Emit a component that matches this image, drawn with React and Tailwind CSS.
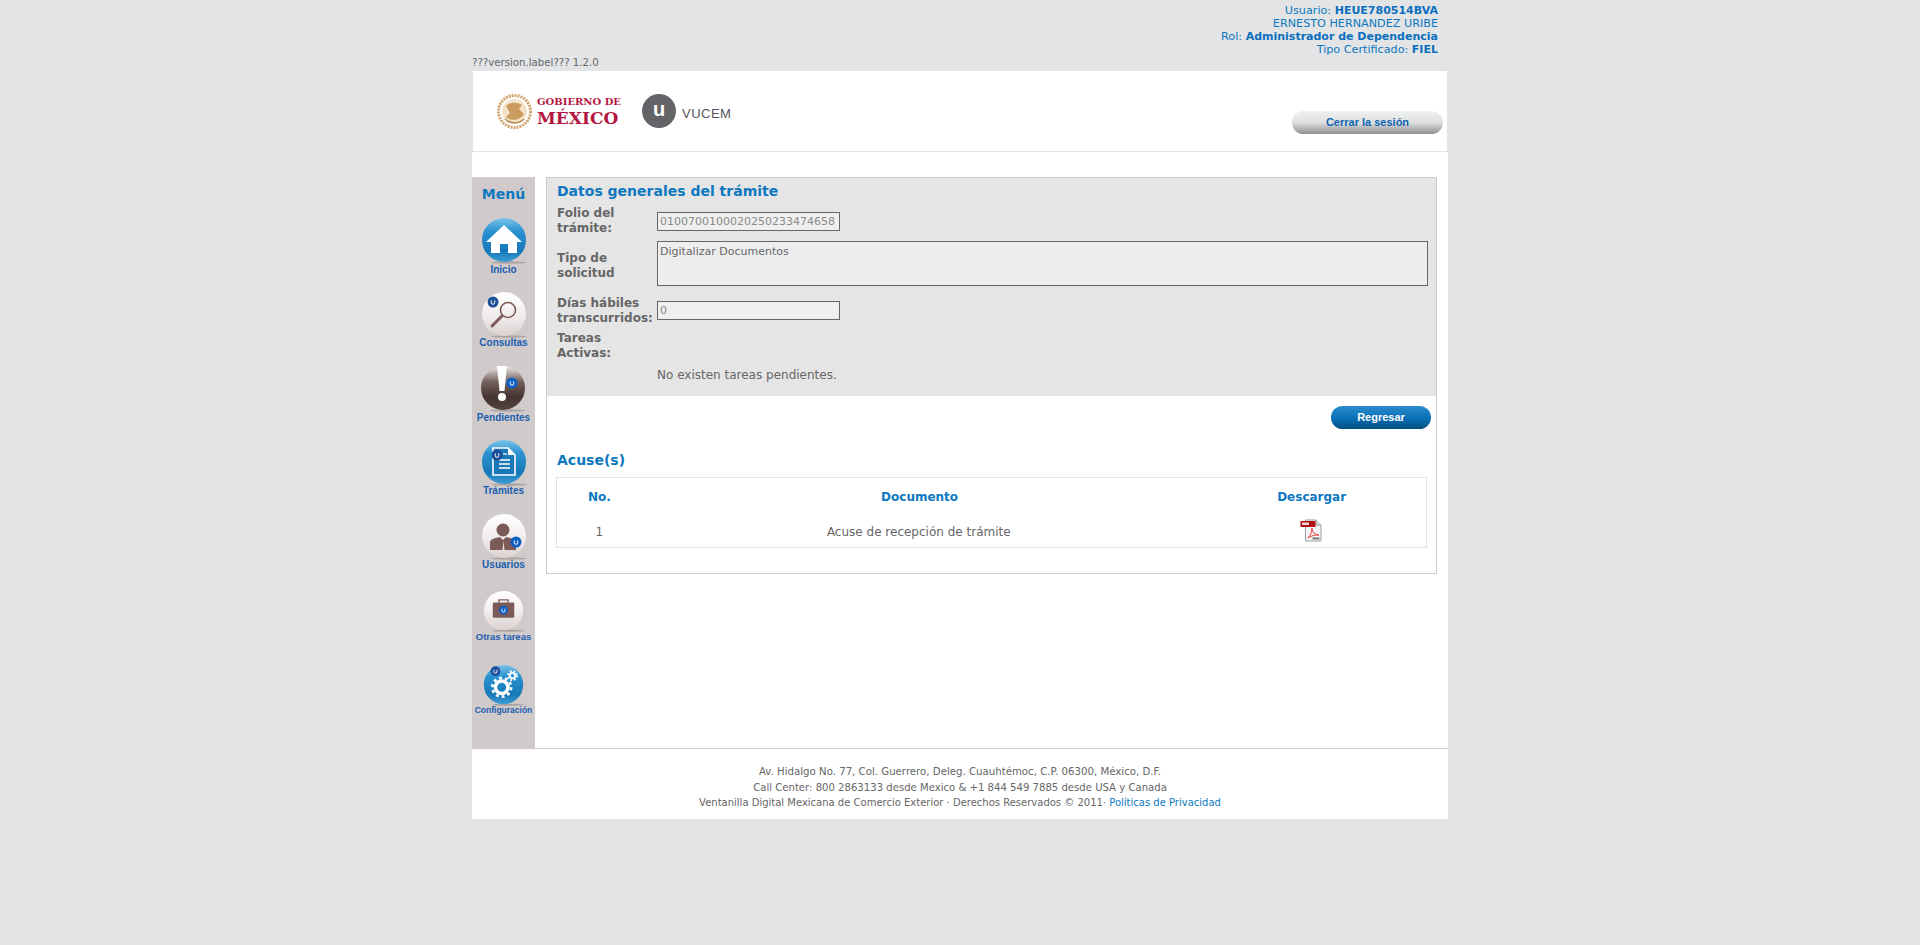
import React from "react";

const Ball = ({ dark, blue, w = 48, h = 50, children }) => (
  <svg width={w} height={h} viewBox="0 0 48 50" className="block">
    <defs>
      <linearGradient id="ballBlue" x1="0" y1="0" x2="0" y2="1">
        <stop offset="0" stopColor="#7cc4ea" />
        <stop offset="0.3" stopColor="#2a92d0" />
        <stop offset="0.75" stopColor="#1678b8" />
        <stop offset="1" stopColor="#3f9ed6" />
      </linearGradient>
      <linearGradient id="ballLight" x1="0" y1="0" x2="0" y2="1">
        <stop offset="0" stopColor="#ffffff" />
        <stop offset="0.5" stopColor="#f3eeee" />
        <stop offset="1" stopColor="#dcd2d2" />
      </linearGradient>
      <linearGradient id="ballDark" x1="0" y1="0" x2="0" y2="1">
        <stop offset="0" stopColor="#efeaea" />
        <stop offset="0.35" stopColor="#75625f" />
        <stop offset="0.7" stopColor="#453431" />
        <stop offset="1" stopColor="#55423f" />
      </linearGradient>
    </defs>
    <ellipse cx="29" cy="46.5" rx="18" ry="1.2" fill="#9a9392" opacity="0.7" />
    <circle cx="24" cy="24" r="22" fill={blue ? "url(#ballBlue)" : dark ? "url(#ballDark)" : "url(#ballLight)"} />
    {children}
  </svg>
);

const UBadge = ({ x, y, r = 5, fill = "#0d5fb8" }) => (
  <g>
    <circle cx={x} cy={y} r={r} fill={fill} />
    <path d={`M${x - 1.7} ${y - 1.6}v2.2a1.7 1.7 0 0 0 3.4 0v-2.2`} fill="none" stroke="#fff" strokeWidth="1" />
  </g>
);

const menuItems = [
  {
    label: "Inicio",
    cls: "h-[74px] flex flex-col items-center",
    labelCls: "text-[10px] -mt-[2px]",
    icon: (
      <Ball blue>
        <path d="M24 9 L42 26 L37 26 L37 37 L28 37 L28 28 L20 28 L20 37 L11 37 L11 26 L6 26 Z" fill="#fff" />
      </Ball>
    ),
  },
  {
    label: "Consultas",
    cls: "h-[74px] flex flex-col items-center",
    labelCls: "text-[10px] -mt-[3px]",
    icon: (
      <Ball>
        <circle cx="28" cy="20" r="7.5" fill="none" stroke="#7b5a58" strokeWidth="1.6" />
        <path d="M22 26 L12 36" stroke="#7b5a58" strokeWidth="3" strokeLinecap="round" />
        <UBadge x={13} y={12} r={5.5} fill="#1d4f98" />
      </Ball>
    ),
  },
  {
    label: "Pendientes",
    cls: "h-[74px] flex flex-col items-center",
    labelCls: "text-[10px] -mt-[2px]",
    icon: (
      <Ball dark>
        <path d="M18 2 L28 2 L25.5 27 L20.5 27 Z" fill="#fff" />
        <circle cx="23" cy="33" r="4" fill="#fff" />
        <UBadge x={33} y={19} r={5.5} fill="#0d5fc4" />
      </Ball>
    ),
  },
  {
    label: "Trámites",
    cls: "h-[74px] flex flex-col items-center",
    labelCls: "text-[10px] -mt-[3px]",
    icon: (
      <Ball blue>
        <path d="M13 10 H28 L35 17 V37 H13 Z" fill="#1a78b8" stroke="#fff" strokeWidth="1.6" />
        <path d="M28 10 V17 H35" fill="#fff" />
        <path d="M19 22 H30 M19 26 H30 M19 30 H30" stroke="#fff" strokeWidth="1.6" />
        <path d="M23 16 H27" stroke="#fff" strokeWidth="1.2" />
        <UBadge x={17} y={17} r={5.5} fill="#1d4f98" />
      </Ball>
    ),
  },
  {
    label: "Usuarios",
    cls: "h-[74px] flex flex-col items-center",
    labelCls: "text-[10px] -mt-[3px]",
    icon: (
      <Ball>
        <circle cx="23" cy="18" r="6.5" fill="#7b5a58" />
        <path d="M10 38 V31 C10 27 15 26 20 25 L23 28 L26 25 C31 26 36 27 36 31 V38 H24.5 L23.5 29 L22.5 38 Z" fill="#7b5a58" />
        <UBadge x={36} y={30} r={5.5} fill="#0d5fc4" />
      </Ball>
    ),
  },
  {
    label: "Otras tareas",
    cls: "h-[74px] pt-[3px] flex flex-col items-center",
    labelCls: "text-[9.5px] -mt-[3px]",
    icon: (
      <Ball w={43} h={45}>
        <path d="M19 15 V12 H29 V15" fill="none" stroke="#7b5a58" strokeWidth="1.6" />
        <rect x="12" y="15" width="24" height="17" rx="1.5" fill="#7b5a58" />
        <UBadge x={24} y={23.5} r={5} fill="#0d5fc4" />
      </Ball>
    ),
  },
  {
    label: "Configuración",
    cls: "h-[74px] pt-[3px] flex flex-col items-center",
    labelCls: "text-[8.5px] -mt-[4px]",
    icon: (
      <Ball blue w={43} h={45}>
        <circle cx="22" cy="27" r="7" fill="none" stroke="#fff" strokeWidth="4" />
        <circle cx="22" cy="27" r="10.5" fill="none" stroke="#fff" strokeWidth="3" strokeDasharray="3.2 3.4" />
        <circle cx="34" cy="14" r="3" fill="none" stroke="#fff" strokeWidth="2" />
        <circle cx="34" cy="14" r="5" fill="none" stroke="#fff" strokeWidth="2" strokeDasharray="2 2" />
        <UBadge x={15} y={9} r={5.5} fill="#1d4f98" />
      </Ball>
    ),
  },
];

const Seal = () => (
  <svg width="35" height="35" viewBox="0 0 35 35">
    <circle cx="17.5" cy="17.5" r="16" fill="none" stroke="#cfa56c" strokeWidth="3" strokeDasharray="2 1" />
    <circle cx="17.5" cy="17.5" r="12.5" fill="#f3e3c9" />
    <path d="M9 12 C13 8 20 8 25 11 L22 15 L27 20 C24 26 14 28 9 23 L13 19 Z" fill="#cb9c5f" />
    <path d="M8 25 C13 30 22 30 27 25" fill="none" stroke="#b98d52" strokeWidth="1.6" />
  </svg>
);

const PdfIcon = () => (
  <svg width="22" height="23" viewBox="0 0 22 23" className="block">
    <path d="M5.5 1 H16 L21 6 V22 H5.5 Z" fill="#f4f4f4" stroke="#9c9c9c" />
    <path d="M16 1 V6 H21" fill="#dcdcdc" stroke="#9c9c9c" />
    <rect x="0.5" y="2" width="15" height="6" fill="#b10d12" />
    <rect x="2" y="3.5" width="7" height="2.5" fill="#f3d5d5" />
    <path d="M8 19 C11 16 12 12 12 9 C12 13 15 16 19 16 C15 15.5 11 17 8 19 Z" fill="none" stroke="#ee3b3b" strokeWidth="1" />
    <rect x="12.5" y="18.5" width="7" height="2" fill="#777" />
  </svg>
);

const App = () => {
  return (
    <div className="min-h-[945px] bg-[#e3e4e6] font-['DejaVu_Sans',Verdana,sans-serif] text-[#666]">
      <div className="mx-auto w-[976px]">
        <div className="pt-[4px] pr-[10px] text-right text-[11.2px] leading-[13px] text-[#0d78c0] h-[55px]">
          <div>Usuario: <b className="text-[11px] text-[#0a6fbe]">HEUE780514BVA</b></div>
          <div>ERNESTO HERNANDEZ URIBE</div>
          <div>Rol: <b className="text-[11px] text-[#0a6fbe]">Administrador de Dependencia</b></div>
          <div>Tipo Certificado: <b className="text-[11px] text-[#0a6fbe]">FIEL</b></div>
        </div>
        <div className="h-[16px] text-[10.2px] leading-[16px]">???version.label??? 1.2.0</div>

        <div className="mx-px h-[80px] bg-white flex items-start relative">
          <div className="mt-[23px] ml-[24px]"><Seal /></div>
          <div className="mt-[25px] ml-[5px] w-[84px] font-['DejaVu_Serif',serif] font-bold text-[#b3163f] whitespace-nowrap">
            <div className="text-[10px] leading-[12px]">GOBIERNO DE</div>
            <div className="text-[17px] leading-[20px]">MÉXICO</div>
          </div>
          <div className="mt-[23px] ml-[21px] w-[34px] h-[34px] rounded-full bg-[#646367] text-white flex items-center justify-center font-['Liberation_Sans',sans-serif] font-bold text-[20px] leading-none pb-[4px]">u</div>
          <div className="mt-[35px] ml-[6px] font-['Liberation_Sans',sans-serif] text-[13px] leading-[16px] tracking-[0.5px] text-[#55555a]">VUCEM</div>
          <button className="absolute left-[819px] top-[40px] w-[151px] h-[23px] rounded-full bg-gradient-to-b from-[#f0f0f0] via-[#dfe0e1] to-[#8d8f91] text-[#0d65b0] font-['Liberation_Sans',sans-serif] font-bold text-[11px] leading-[20px] pb-[1px]">
            Cerrar la sesión
          </button>
        </div>

        <div className="bg-white border-t border-[#e3e3e3]">
          <div className="flex pt-[25px] h-[597px] border-b border-[#ccc]">
            <div className="w-[63px] bg-[#d0caca] shrink-0 flex flex-col items-center">
              <div className="h-[39px] pt-[7px] text-[14px] leading-[20px] font-bold text-[#0d78c0]">Menú</div>
              {menuItems.map((item) => (
                <div key={item.label} className={item.cls}>
                  {item.icon}
                  <div className={`${item.labelCls} leading-[12px] whitespace-nowrap font-['Liberation_Sans',sans-serif] font-bold text-[#1a5fb0]`}>
                    {item.label}
                  </div>
                </div>
              ))}
            </div>

            <div className="ml-[11px] w-[891px] h-[397px] border border-[#ccc] bg-white">
              <div className="h-[218px] bg-[#e5e5e5] pl-[10px] pr-[8px] pt-[3px]">
                <h2 className="text-[14px] leading-[20px] font-bold text-[#0d78c0]">Datos generales del trámite</h2>
                <div className="flex items-center mt-[5px] h-[30px]">
                  <div className="w-[100px] text-[12px] leading-[15px] font-bold">Folio del<br />trámite:</div>
                  <div className="w-[183px] h-[19px] border border-[#666] bg-[#efefef] pl-[2px] text-[11px] leading-[17px] text-[#8a8a8a] whitespace-nowrap">0100700100020250233474658</div>
                </div>
                <div className="flex items-center mt-[5px] h-[45px]">
                  <div className="w-[100px] pt-[4px] text-[12px] leading-[15px] font-bold">Tipo de<br />solicitud</div>
                  <div className="flex-1 h-[45px] border border-[#666] bg-[#eee] pl-[2px] pt-[2px] text-[11px] leading-[15px]">Digitalizar Documentos</div>
                </div>
                <div className="flex items-center mt-[9px] h-[31px]">
                  <div className="w-[100px] text-[12px] leading-[15px] font-bold whitespace-nowrap">Días hábiles<br />transcurridos:</div>
                  <div className="w-[183px] h-[19px] border border-[#666] bg-[#efefef] pl-[2px] text-[11px] leading-[17px] text-[#8a8a8a]">0</div>
                </div>
                <div className="mt-[5px] text-[12px] leading-[15px] font-bold">Tareas<br />Activas:</div>
                <div className="mt-[6px] pl-[100px] text-[12px] leading-[16px]">No existen tareas pendientes.</div>
              </div>

              <div className="flex justify-end pt-[10px] pr-[5px]">
                <button className="w-[100px] h-[23px] rounded-full bg-gradient-to-b from-[#2a8ccb] via-[#0a72bb] to-[#04507f] text-white font-['Liberation_Sans',sans-serif] font-bold text-[11px] leading-[20px] pb-[2px]">
                  Regresar
                </button>
              </div>

              <h2 className="mt-[21px] ml-[10px] text-[14px] leading-[20px] font-bold text-[#0d78c0]">Acuse(s)</h2>
              <div className="mt-[7px] mx-[9px] h-[71px] border border-[#e3e3e3] text-[12px]">
                <div className="flex h-[36px] pt-[2px] items-center text-center font-bold text-[#0d78c0]">
                  <div className="w-[85px]">No.</div>
                  <div className="w-[556px]">Documento</div>
                  <div className="w-[229px]">Descargar</div>
                </div>
                <div className="flex h-[33px] pt-[2px] items-center text-center">
                  <div className="w-[85px]">1</div>
                  <div className="w-[556px]">Acuse de recepción de trámite</div>
                  <div className="w-[231px] flex justify-center -mt-[2px]"><PdfIcon /></div>
                </div>
              </div>
            </div>
          </div>

          <div className="h-[70px] pt-[15px] text-center text-[10px] leading-[15.5px] text-[#666]">
            <div className="text-[10.2px]">Av. Hidalgo No. 77, Col. Guerrero, Deleg. Cuauhtémoc, C.P. 06300, México, D.F.</div>
            <div className="text-[10.1px]">Call Center: 800 2863133 desde Mexico &amp; +1 844 549 7885 desde USA y Canada</div>
            <div>Ventanilla Digital Mexicana de Comercio Exterior · Derechos Reservados © 2011· <span className="text-[#0d78c0]">Políticas de Privacidad</span></div>
          </div>
        </div>
      </div>
    </div>
  );
};

export default App;
